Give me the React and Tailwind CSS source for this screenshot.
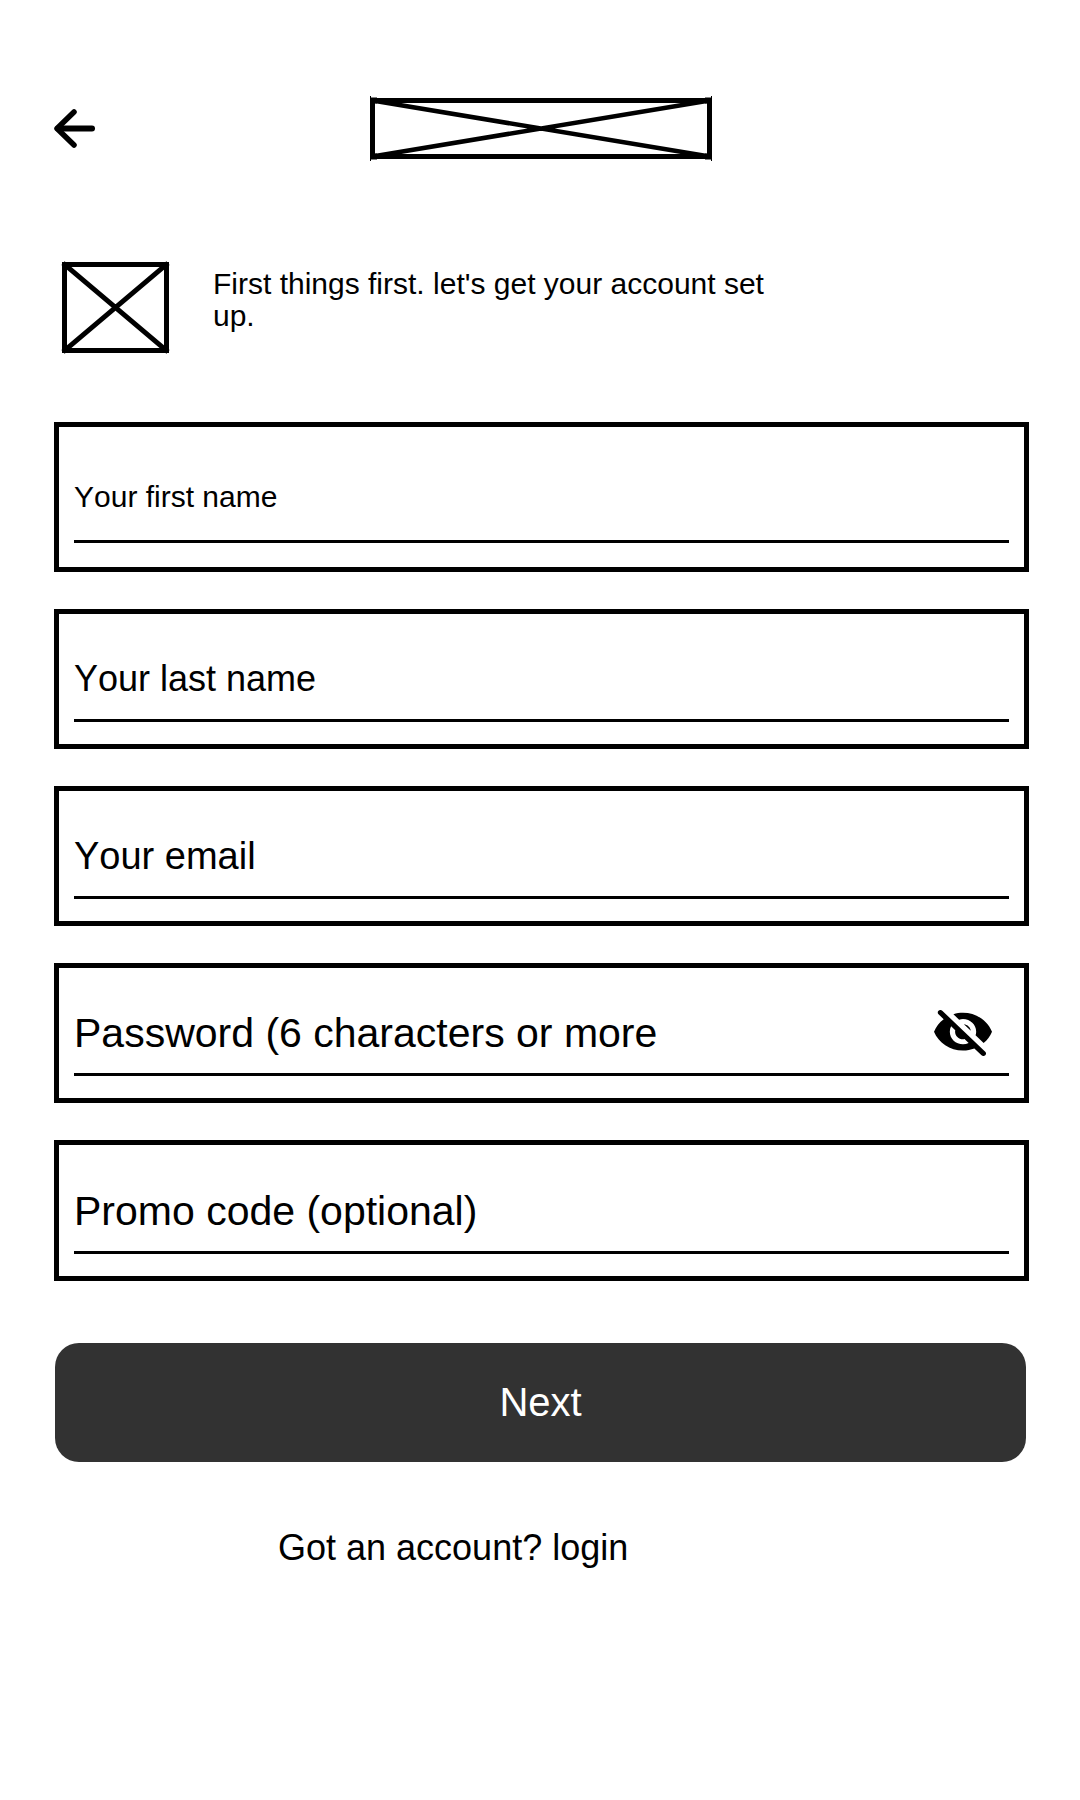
import React, { useState } from "react";

function BackArrow() {
  return (
    <svg width="42" height="40" viewBox="0 0 42 40" fill="none" stroke="black" strokeLinecap="round" strokeLinejoin="round" aria-hidden="true">
      <path d="M20 3 3 19.5l17 16.5" strokeWidth="5.5" />
      <path d="M4 19.5h34" strokeWidth="6" />
    </svg>
  );
}

function LogoPlaceholder() {
  return (
    <svg width="342" height="65" viewBox="0 0 342 65" fill="none" stroke="black" role="img" aria-label="Logo">
      <rect x="2.5" y="4.5" width="337" height="56" strokeWidth="5" />
      <path d="M2.5 4.5l337 56M339.5 4.5l-337 56" strokeWidth="4.5" />
      <path d="M.5 0v65M341.5 0v65" strokeWidth="1" />
      <path d="M0 4.5h7M335 4.5h7M0 60.5h7M335 60.5h7" strokeWidth="6" />
    </svg>
  );
}

function PicturePlaceholder() {
  return (
    <svg width="109" height="95" viewBox="0 0 109 95" fill="none" stroke="black" role="img" aria-label="Picture">
      <rect x="3.5" y="4.5" width="102" height="86" strokeWidth="5" />
      <path d="M2 3.2l105 88.6M107 3.2L2 91.8" strokeWidth="5" />
    </svg>
  );
}

function EyeOff() {
  return (
    <svg width="58" height="46" viewBox="1 2.87 22 18.32" preserveAspectRatio="none" fill="black" aria-hidden="true">
      <path d="M12 6.5c2.76 0 5 2.24 5 5 0 .51-.1 1-.24 1.46l3.06 3.06c1.39-1.23 2.49-2.77 3.18-4.53C21.27 7.11 17 4 12 4c-1.27 0-2.49.2-3.64.57l2.17 2.17c.47-.14.96-.24 1.47-.24zM2.71 3.16c-.39.39-.39 1.02 0 1.41l1.97 1.97C3.06 7.83 1.77 9.53 1 11.5 2.73 15.89 7 19 12 19c1.52 0 2.97-.3 4.31-.82l2.72 2.72c.39.39 1.02.39 1.41 0 .39-.39.39-1.02 0-1.41L4.13 3.16c-.39-.39-1.03-.39-1.42 0zM12 16.5c-2.76 0-5-2.24-5-5 0-.77.18-1.5.49-2.14l1.57 1.57c-.03.18-.06.37-.06.57 0 1.66 1.34 3 3 3 .2 0 .38-.03.57-.07L14.14 16c-.65.32-1.37.5-2.14.5zm2.97-5.33c-.15-1.4-1.25-2.49-2.64-2.64l2.64 2.64z" />
    </svg>
  );
}

// The label rests on the empty input and gives way once something is typed.
function Field({ id, label, type = "text", size, box = "pt-[23px] pb-[22px]", height = "h-[82px]", children }) {
  return (
    <div className={`border-5 border-black px-[15px] ${box}`}>
      <div className="flex items-center border-b-3 border-black">
        <div className={`grid min-w-0 flex-1 items-center ${height} ${size}`}>
          <input
            id={id}
            type={type}
            placeholder=" "
            className="peer col-start-1 row-start-1 h-full w-full bg-transparent pt-0.5 outline-none"
          />
          <label htmlFor={id} className="invisible col-start-1 row-start-1 cursor-text pt-0.5 leading-[48px] peer-placeholder-shown:visible">
            {label}
          </label>
        </div>
        {children}
      </div>
    </div>
  );
}

export default function App() {
  const [visible, setVisible] = useState(false);
  return (
    <main className="min-h-screen bg-white pt-24 pr-[51px] pb-24 pl-[54px] font-['Liberation_Sans',Arial,sans-serif] text-black [font-kerning:none]">
      <header className="grid grid-cols-[1fr_auto_1fr] items-center pr-px">
        <button type="button" aria-label="Back" className="justify-self-start">
          <BackArrow />
        </button>
        <LogoPlaceholder />
      </header>

      <section className="mt-[99px] flex items-start gap-[43px] pl-[7px]">
        <div className="shrink-0">
          <PicturePlaceholder />
        </div>
        <p className="max-w-[580px] pt-2 text-[30px] leading-8">First things first. let's get your account set up.</p>
      </section>

      <form className="mt-[67px]" onSubmit={(e) => e.preventDefault()}>
        <div className="flex flex-col gap-[37px]">
          <Field id="first-name" label="Your first name" size="text-[30px]" box="pt-[25px] pb-[24px]" height="h-[88px]" />
          <Field id="last-name" label="Your last name" size="text-[36px]" />
          <Field id="email" label="Your email" type="email" size="text-[38px]" />
          <Field id="password" label="Password (6 characters or more" type={visible ? "text" : "password"} size="text-[41px]">
            <button type="button" aria-label="Show password" aria-pressed={visible} onClick={() => setVisible(!visible)} className="mr-[17px] shrink-0 pt-0.5">
              <EyeOff />
            </button>
          </Field>
          <Field id="promo" label="Promo code (optional)" size="text-[41px]" height="h-[83px]" />
        </div>
        <div className="mt-[62px] flex pr-[3px] pl-px">
          <button type="submit" className="h-[119px] flex-1 rounded-3xl bg-[#323232] pb-0.5 text-[40px] text-white">Next</button>
        </div>
      </form>

      <p className="mt-[66px] pl-[224px] text-[36px] leading-10">
        Got an account? <a href="#login">login</a>
      </p>
    </main>
  );
}
